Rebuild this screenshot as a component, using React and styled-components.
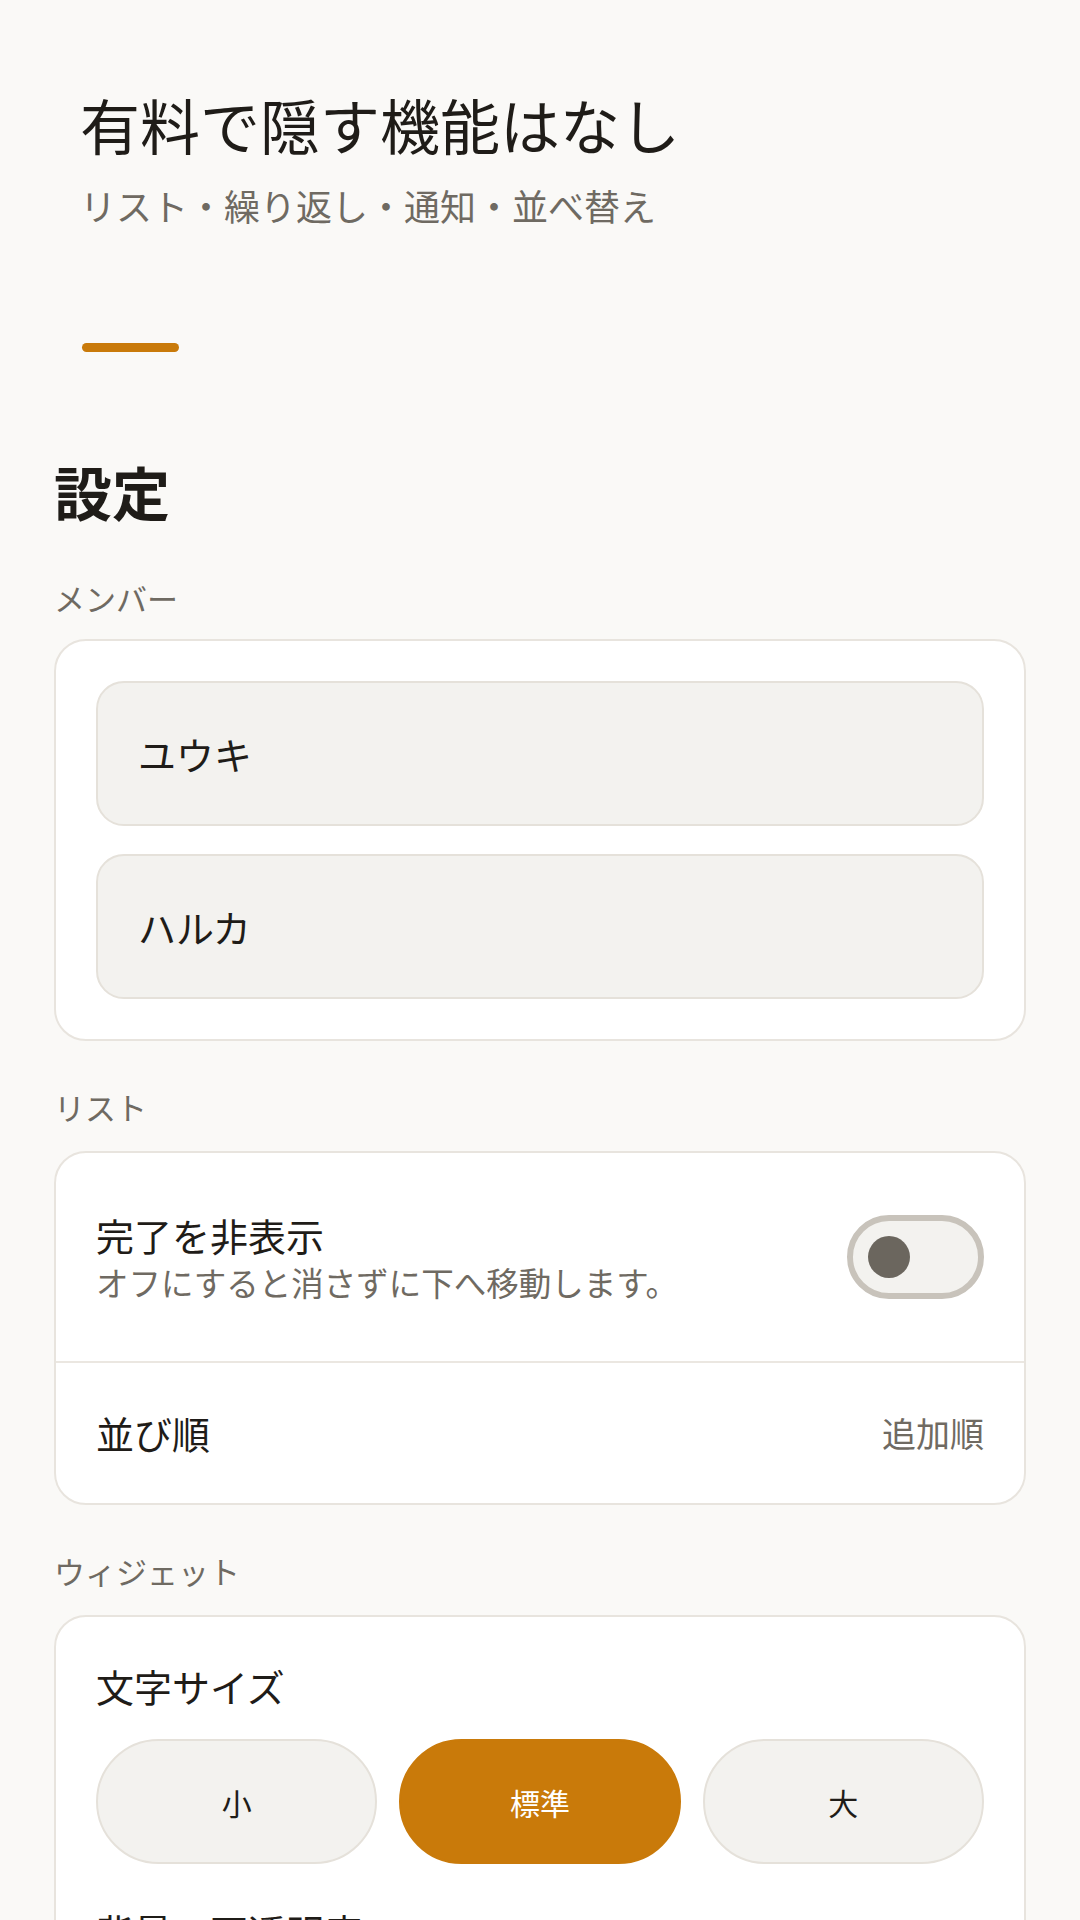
import React, { useState } from "react";
import styled, { createGlobalStyle } from "styled-components";

const GlobalStyle = createGlobalStyle`
  * {
    box-sizing: border-box;
  }
  body {
    margin: 0;
    background: #faf9f7;
    font-family: "Noto Sans CJK JP", "Noto Sans", sans-serif;
    color: #1f1c18;
  }
`;

const Page = styled.main`
  width: 1080px;
  min-height: 1920px;
  padding: 85px 54px 60px;
  background: #faf9f7;
`;

// ヘッダー
const Hero = styled.header`
  padding-left: 26px;
`;
const Title = styled.h1`
  margin: 0;
  font-size: 60px;
  line-height: 78px;
  font-weight: 400;
  color: #1f1c18;
`;
const Subtitle = styled.p`
  margin: 18px 0 0;
  font-size: 36px;
  line-height: 48px;
  color: #6f6a62;
`;
const Accent = styled.div`
  width: 97px;
  height: 9px;
  margin-top: 114px;
  margin-left: 2px;
  border-radius: 5px;
  background: #c97a0a;
`;

const Heading = styled.h2`
  margin: 102px 0 0;
  font-size: 58px;
  line-height: 75px;
  font-weight: 700;
  color: #1f1c18;
`;

const SectionLabel = styled.div`
  margin-top: ${({ first }) => (first ? "49px" : "46px")};
  font-size: 31px;
  line-height: 40px;
  color: #6f6a62;
`;

const Card = styled.section`
  margin-top: ${({ first }) => (first ? "21px" : "24px")};
  background: #fff;
  border: 2px solid #e8e4de;
  border-radius: 32px;
  overflow: hidden;
`;

const MemberList = styled.div`
  display: flex;
  flex-direction: column;
  gap: 28px;
  padding: 40px;
`;
const MemberItem = styled.div`
  height: 145px;
  display: flex;
  align-items: center;
  padding: 0 40px;
  background: #f3f2ef;
  border: 2px solid #e5e1da;
  border-radius: 28px;
  font-size: 38px;
  color: #1f1c18;
`;

const Row = styled.div`
  display: flex;
  align-items: center;
  justify-content: space-between;
  padding: ${({ tall }) => (tall ? "57px 40px" : "45px 40px")};
  & + & {
    border-top: 2px solid #ebe7e1;
  }
`;
const RowText = styled.div`
  display: flex;
  flex-direction: column;
`;
const RowTitle = styled.div`
  font-size: 38px;
  line-height: 50px;
  color: #1f1c18;
`;
const RowNote = styled.div`
  font-size: 32.5px;
  line-height: 44px;
  color: #6f6a62;
`;
const RowValue = styled.div`
  font-size: 34px;
  line-height: 50px;
  color: #6f6a62;
`;

const Toggle = styled.button`
  width: 137px;
  height: 84px;
  flex-shrink: 0;
  display: flex;
  align-items: center;
  justify-content: ${({ on }) => (on ? "flex-end" : "flex-start")};
  padding: 0 15px;
  background: ${({ on }) => (on ? "#c97a0a" : "#f3f2ef")};
  border: 6px solid ${({ on }) => (on ? "#c97a0a" : "#c8c3bb")};
  border-radius: 42px;
  cursor: pointer;
`;
const Knob = styled.span`
  width: 42px;
  height: 42px;
  border-radius: 50%;
  background: ${({ on }) => (on ? "#fff" : "#6b665e")};
`;

const WidgetBody = styled.div`
  padding: 44px 40px 40px;
`;
const Segments = styled.div`
  display: grid;
  grid-template-columns: repeat(3, 1fr);
  gap: 22px;
  margin-top: 28px;
`;
const Segment = styled.button`
  height: 125px;
  border-radius: 63px;
  border: 2px solid ${({ active }) => (active ? "#c97a0a" : "#e5e1da")};
  background: ${({ active }) => (active ? "#c97a0a" : "#f3f2ef")};
  color: ${({ active }) => (active ? "#fff" : "#1f1c18")};
  font-family: "Noto Sans CJK JP", "Noto Sans", sans-serif;
  font-size: 30px;
  cursor: pointer;
`;
const NextTitle = styled(RowTitle)`
  margin-top: 42px;
`;

const sizes = ["小", "標準", "大"];

export default function App() {
  const [hideDone, setHideDone] = useState(false);
  const [size, setSize] = useState("標準");

  return (
    <>
      <GlobalStyle />
      <Page>
        <Hero>
          <Title>有料で隠す機能はなし</Title>
          <Subtitle>リスト・繰り返し・通知・並べ替え</Subtitle>
          <Accent />
        </Hero>

        <Heading>設定</Heading>

        <SectionLabel first>メンバー</SectionLabel>
        <Card first>
          <MemberList>
            <MemberItem>ユウキ</MemberItem>
            <MemberItem>ハルカ</MemberItem>
          </MemberList>
        </Card>

        <SectionLabel>リスト</SectionLabel>
        <Card>
          <Row tall>
            <RowText>
              <RowTitle>完了を非表示</RowTitle>
              <RowNote>オフにすると消さずに下へ移動します。</RowNote>
            </RowText>
            <Toggle on={hideDone} onClick={() => setHideDone(!hideDone)}>
              <Knob on={hideDone} />
            </Toggle>
          </Row>
          <Row>
            <RowTitle>並び順</RowTitle>
            <RowValue>追加順</RowValue>
          </Row>
        </Card>

        <SectionLabel>ウィジェット</SectionLabel>
        <Card>
          <WidgetBody>
            <RowTitle>文字サイズ</RowTitle>
            <Segments>
              {sizes.map((s) => (
                <Segment key={s} active={size === s} onClick={() => setSize(s)}>
                  {s}
                </Segment>
              ))}
            </Segments>
            <NextTitle>背景の不透明度</NextTitle>
          </WidgetBody>
        </Card>
      </Page>
    </>
  );
}
